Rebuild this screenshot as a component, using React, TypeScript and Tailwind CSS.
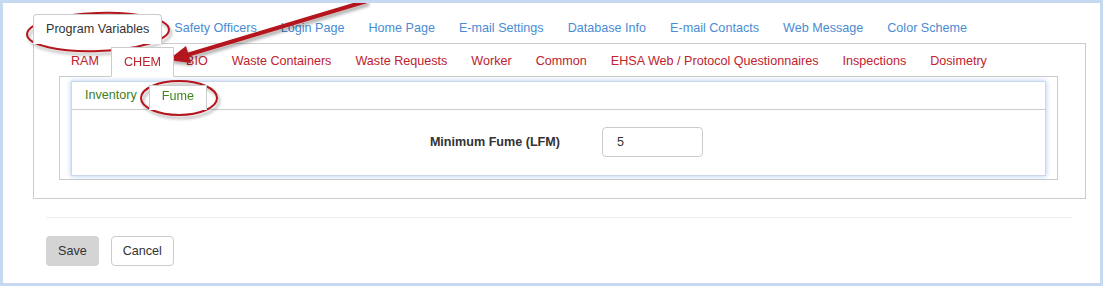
import React from "react";

const topTabs = [
  "Program Variables",
  "Safety Officers",
  "Login Page",
  "Home Page",
  "E-mail Settings",
  "Database Info",
  "E-mail Contacts",
  "Web Message",
  "Color Scheme",
];

const chemTabs = [
  "RAM",
  "CHEM",
  "BIO",
  "Waste Containers",
  "Waste Requests",
  "Worker",
  "Common",
  "EHSA Web / Protocol Questionnaires",
  "Inspections",
  "Dosimetry",
];

function Annotations() {
  return (
    <svg
      className="absolute inset-0 pointer-events-none"
      width="1103"
      height="286"
      viewBox="0 0 1103 286"
    >
      <defs>
        <filter id="shadow" x="-20%" y="-50%" width="140%" height="200%">
          <feDropShadow dx="2" dy="3" stdDeviation="1.5" floodColor="#000" floodOpacity="0.3" />
        </filter>
      </defs>
      <g filter="url(#shadow)" fill="none" stroke="#b3151c" strokeWidth="2">
        <ellipse cx="95" cy="29" rx="71" ry="19" transform="rotate(-2 95 29)" />
        <ellipse cx="176" cy="95" rx="38" ry="17" />
      </g>
      <g filter="url(#shadow)">
        <line x1="364" y1="-2" x2="184" y2="52" stroke="#b3151c" strokeWidth="4" />
        <polygon points="165,57 188,60 183,43" fill="#b3151c" />
      </g>
    </svg>
  );
}

export default function App() {
  return (
    <div
      className="relative w-[1103px] h-[286px] border-[3px] border-[#c6d9f0] bg-white text-[12.6px] text-[#333]"
      style={{ fontFamily: '"Liberation Sans", Arial, sans-serif' }}
    >
      {/* Top-level program tabs */}
      <div className="ml-[30px] mr-[14px] mt-[10px]">
        <ul className="flex h-[30px] items-end">
          {topTabs.map((t, i) =>
            i === 0 ? (
              <li
                key={t}
                className="h-[30px] px-[12px] flex items-center border border-[#ccc] border-b-white rounded-t-[4px] -mb-px bg-white relative z-10"
              >
                {t}
              </li>
            ) : (
              <li key={t} className="h-[30px] px-[12px] flex items-center text-[#4a8cd4]">
                {t}
              </li>
            )
          )}
        </ul>

        <div className="border border-[#ccc] pl-[25px] pr-[27px] pt-[2px] pb-[18px]">
          {/* CHEM level tabs */}
          <ul className="flex h-[30px] items-end">
            {chemTabs.map((t) =>
              t === "CHEM" ? (
                <li
                  key={t}
                  className="h-[30px] px-[12px] flex items-center border border-[#ccc] border-b-white -mb-px bg-white relative z-10 text-[#b8242f]"
                >
                  {t}
                </li>
              ) : (
                <li key={t} className="h-[30px] px-[12px] flex items-center text-[#c0222e]">
                  {t}
                </li>
              )
            )}
          </ul>

          <div className="border border-[#ccc] px-[11px] pt-[4px] pb-[3px]">
            {/* Inventory / Fume box */}
            <div className="border border-[#c9d9ea] shadow-[0_0_5px_rgba(120,165,225,0.6)] bg-white">
              <ul className="flex h-[28px] items-end pl-[1px] border-b border-[#ccc]">
                <li className="h-[25px] px-[12px] pb-[3px] flex items-center text-[#3f7d1f]">Inventory</li>
                <li className="h-[25px] px-[12px] pb-[3px] flex items-center text-[#3a8a1a] border border-[#ccc] border-b-white -mb-px bg-white relative z-10">
                  Fume
                </li>
              </ul>
              <div className="flex items-center pt-[17px] pb-[18px]">
                <label className="w-[488px] text-right font-bold">Minimum Fume (LFM)</label>
                <input
                  className="ml-[42px] w-[101px] h-[30px] px-[14px] border border-[#ccc] rounded-[4px] text-[12.6px] text-[#333] outline-none"
                  defaultValue="5"
                />
              </div>
            </div>
          </div>
        </div>
      </div>

      {/* Footer actions */}
      <div className="ml-[43px] mr-[28px] mt-[18px] border-t border-[#eee] pt-[18px] flex gap-[12px]">
        <button className="h-[30px] px-[12px] rounded-[4px] bg-[#d4d4d4] text-[#333]">Save</button>
        <button className="h-[30px] px-[11px] rounded-[4px] bg-white border border-[#ccc] text-[#333]">
          Cancel
        </button>
      </div>

      <Annotations />
    </div>
  );
}
